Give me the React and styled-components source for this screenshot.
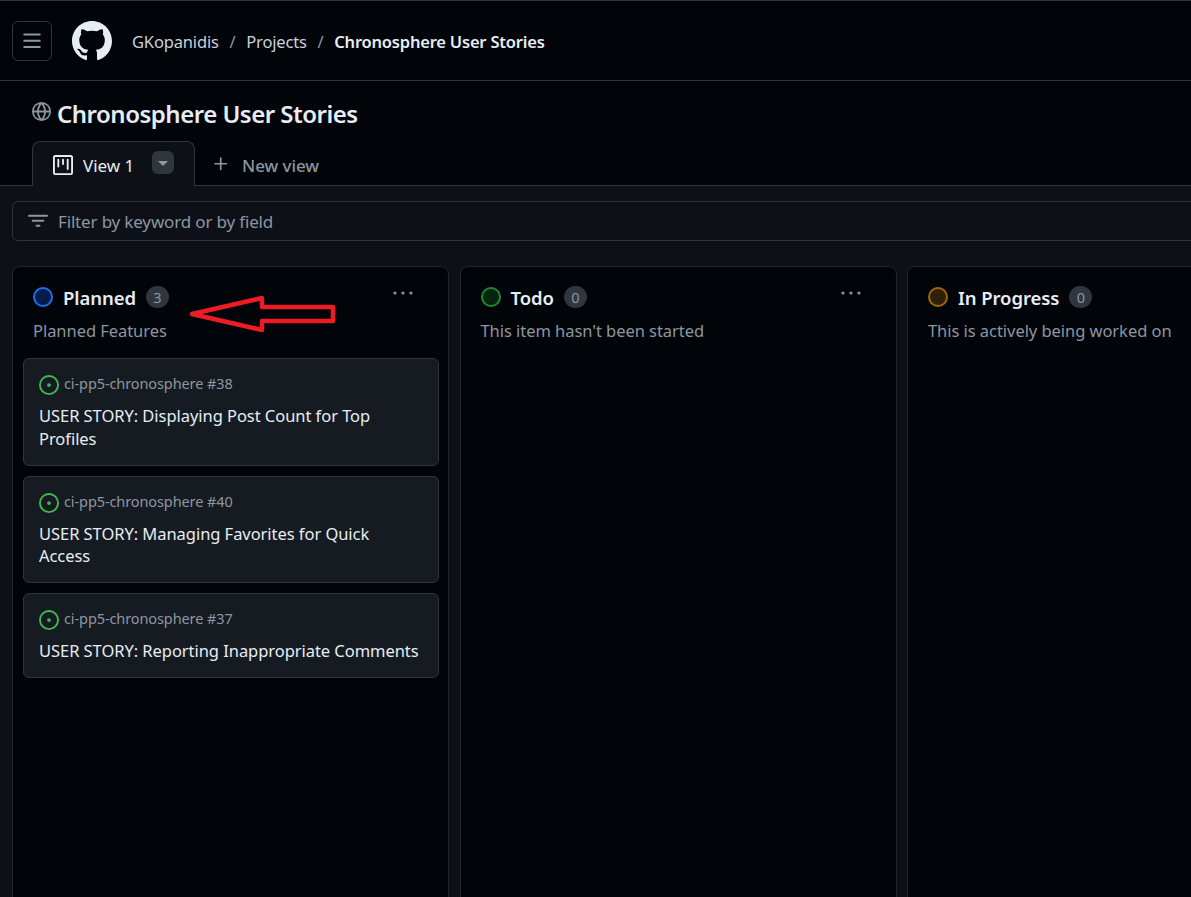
import React from 'react';
import styled, { createGlobalStyle } from 'styled-components';

const GlobalStyle = createGlobalStyle`
  html, body {
    margin: 0;
    padding: 0;
    height: 100%;
    overflow: hidden;
    background-color: #010409;
  }
  body {
    font-family: "Noto Sans", "Open Sans", sans-serif;
    color: #e6edf3;
  }
  * {
    box-sizing: border-box;
  }
`;

const Page = styled.div`
  position: relative;
  width: 1191px;
  height: 897px;
  overflow: hidden;
  display: flex;
  flex-direction: column;
  border-top: 1px solid #30363d;
`;

const TopBar = styled.header`
  height: 80px;
  flex: none;
  display: flex;
  align-items: center;
  padding: 0 12px;
  border-bottom: 1px solid #30363d;
`;

const MenuButton = styled.button`
  width: 40px;
  height: 40px;
  padding: 0;
  display: flex;
  align-items: center;
  justify-content: center;
  background: transparent;
  border: 1px solid #30363d;
  border-radius: 6px;
  color: #8d96a0;
`;

const Logo = styled.svg`
  width: 40px;
  height: 40px;
  margin-left: 20px;
  fill: #e6edf3;
`;

const Crumbs = styled.nav`
  display: flex;
  align-items: center;
  margin-left: 20px;
  padding-top: 2px;
  font-size: 16.5px;
  letter-spacing: -0.16px;
  color: #c9d1d9;
`;

const Slash = styled.span`
  margin: 0 10.75px;
  color: #8d96a0;
`;

const CrumbCurrent = styled.span`
  font-weight: 600;
  letter-spacing: -0.2px;
  color: #e6edf3;
`;

const TitleRow = styled.div`
  display: flex;
  align-items: center;
  height: 60px;
  padding: 0 0 0 32px;
  flex: none;
`;

const Globe = styled.svg`
  width: 19px;
  height: 19px;
  margin-right: 6px;
  fill: #8d96a0;
`;

const Title = styled.h1`
  margin: 4px 0 0;
  font-size: 24px;
  font-weight: 600;
  letter-spacing: -0.5px;
  color: #e6edf3;
`;

const TabStrip = styled.div`
  height: 45px;
  flex: none;
  display: flex;
  align-items: stretch;
  padding-left: 32px;
  border-bottom: 1px solid #30363d;
`;

const ActiveTab = styled.div`
  width: 163px;
  height: 45px;
  display: flex;
  align-items: center;
  padding: 2px 0 0 20px;
  background-color: #0d1117;
  border: 1px solid #30363d;
  border-bottom: none;
  border-radius: 8px 8px 0 0;
  font-size: 17px;
  letter-spacing: 0;
`;

const TabIcon = styled.svg`
  width: 20px;
  height: 20px;
  margin-right: 10px;
  fill: #e6edf3;
`;

const Caret = styled.span`
  width: 22px;
  height: 23px;
  margin: -5px 0 0 18px;
  display: flex;
  align-items: center;
  justify-content: center;
  background-color: #30363d;
  border-radius: 6px;
  &::after {
    content: '';
    border-left: 5px solid transparent;
    border-right: 5px solid transparent;
    border-top: 5px solid #9198a1;
    margin-top: 2px;
  }
`;

const NewView = styled.div`
  display: flex;
  align-items: center;
  margin-left: 17px;
  padding-top: 4px;
  color: #8d96a0;
  font-size: 17px;
  letter-spacing: -0.05px;
  font-weight: 500;
`;

const PlusIcon = styled.svg`
  width: 18px;
  height: 18px;
  margin: -3px 12px 0 0;
  fill: #8d96a0;
`;

const Board = styled.main`
  flex: 1;
  min-height: 0;
  display: flex;
  flex-direction: column;
  padding: 15px 0 0 12px;
  background-color: #0d1117;
`;

const FilterBar = styled.div`
  height: 40px;
  width: 1200px;
  flex: none;
  display: flex;
  align-items: center;
  padding-left: 15px;
  border: 1px solid #30363d;
  border-radius: 6px;
  color: #8d96a0;
  font-size: 17px;
  letter-spacing: -0.16px;
`;

const FilterIcon = styled.svg`
  width: 20px;
  height: 20px;
  margin-right: 10px;
  fill: #8d96a0;
`;

const Columns = styled.div`
  display: flex;
  gap: 10.5px;
  margin-top: 25px;
  flex: 1;
  min-height: 0;
`;

const Column = styled.section`
  width: 437px;
  flex: none;
  height: 700px;
  padding: 0 9px 0 10px;
  background-color: #010409;
  border: 1px solid #21262d;
  border-radius: 8px;
`;

const ColumnHead = styled.div`
  display: flex;
  align-items: center;
  height: 22px;
  margin: 19px 0 0 10px;
`;

const StatusDot = styled.span`
  width: 20px;
  height: 20px;
  flex: none;
  border-radius: 50%;
  border: 2px solid ${(p) => p.$ring};
  background-color: ${(p) => p.$fill};
`;

const ColumnName = styled.span`
  margin-left: 10px;
  font-size: 18.5px;
  font-weight: 600;
  letter-spacing: -0.08px;
  color: #e6edf3;
`;

const CountPill = styled.span`
  margin-left: 10px;
  width: 23px;
  height: 22px;
  display: flex;
  align-items: center;
  justify-content: center;
  border-radius: 11px;
  background-color: #30363d;
  color: #8d96a0;
  font-size: 14.5px;
`;

const MoreDots = styled.svg`
  width: 22px;
  height: 6px;
  margin: -8px 25px 0 auto;
  fill: #8d96a0;
`;

const ColumnDesc = styled.p`
  margin: 12px 0 0 10px;
  height: 22px;
  line-height: 22px;
  font-size: 16.5px;
  letter-spacing: -0.05px;
  color: #8d96a0;
  white-space: nowrap;
`;

const CardList = styled.div`
  display: flex;
  flex-direction: column;
  gap: 10px;
  margin-top: 16px;
`;

const Card = styled.article`
  padding: 14px 15px 14.5px 15px;
  background-color: #161b22;
  border: 1px solid #30363d;
  border-radius: 6px;
`;

const CardRepo = styled.div`
  display: flex;
  align-items: center;
  height: 22px;
  padding-bottom: 2px;
  font-size: 14.5px;
  letter-spacing: -0.1px;
  color: #8d96a0;
`;

const IssueIcon = styled.svg`
  width: 20px;
  height: 20px;
  margin: 4px 5px 0 0;
  fill: #3fb950;
`;

const CardTitle = styled.div`
  margin-top: 10px;
  font-size: 16.5px;
  line-height: 22.5px;
  letter-spacing: -0.05px;
  color: #e6edf3;
`;

const Arrow = styled.svg`
  position: absolute;
  left: 186px;
  top: 292px;
  width: 152px;
  height: 42px;
  fill: none;
  stroke: #ed1c24;
  stroke-width: 4.5;
  stroke-linejoin: round;
`;

const repo = 'ci-pp5-chronosphere';

const columns = [
  {
    name: 'Planned',
    count: 3,
    desc: 'Planned Features',
    ring: '#1f6feb',
    fill: '#051d4d',
    cards: [
      { num: 38, title: 'USER STORY: Displaying Post Count for Top Profiles' },
      { num: 40, title: 'USER STORY: Managing Favorites for Quick Access' },
      { num: 37, title: 'USER STORY: Reporting Inappropriate Comments' },
    ],
  },
  { name: 'Todo', count: 0, desc: "This item hasn't been started", ring: '#238636', fill: '#04260f', cards: [] },
  { name: 'In Progress', count: 0, desc: 'This is actively being worked on', ring: '#9e6a03', fill: '#2e2009', cards: [] },
];

function MenuIcon() {
  return (
    <svg width="20" height="20" viewBox="0 0 16 16" fill="currentColor">
      <path d="M1 2.75A.75.75 0 0 1 1.75 2h12.5a.75.75 0 0 1 0 1.5H1.75A.75.75 0 0 1 1 2.75Zm0 5A.75.75 0 0 1 1.75 7h12.5a.75.75 0 0 1 0 1.5H1.75A.75.75 0 0 1 1 7.75ZM1.75 12h12.5a.75.75 0 0 1 0 1.5H1.75a.75.75 0 0 1 0-1.5Z" />
    </svg>
  );
}

function App() {
  return (
    <Page>
      <GlobalStyle />
      <TopBar>
        <MenuButton aria-label="Open menu">
          <MenuIcon />
        </MenuButton>
        <Logo viewBox="0 0 16 16">
          <path d="M8 0c4.42 0 8 3.58 8 8a8.013 8.013 0 0 1-5.45 7.59c-.4.08-.55-.17-.55-.38 0-.27.01-1.13.01-2.2 0-.75-.25-1.23-.54-1.48 1.78-.2 3.65-.88 3.65-3.95 0-.88-.31-1.59-.82-2.15.08-.2.36-1.02-.08-2.12 0 0-.67-.22-2.2.82-.64-.18-1.32-.27-2-.27-.68 0-1.36.09-2 .27-1.53-1.03-2.2-.82-2.2-.82-.44 1.1-.16 1.92-.08 2.12-.51.56-.82 1.27-.82 2.15 0 3.06 1.86 3.75 3.64 3.95-.23.2-.44.55-.51 1.07-.46.21-1.61.55-2.33-.66-.15-.24-.6-.83-1.23-.82-.67.01-.27.38.01.53.34.19.73.9.82 1.13.16.45.68 1.31 2.69.94 0 .67.01 1.3.01 1.49 0 .21-.15.45-.55.38A7.995 7.995 0 0 1 0 8c0-4.42 3.58-8 8-8Z" />
        </Logo>
        <Crumbs>
          <span>GKopanidis</span>
          <Slash>/</Slash>
          <span>Projects</span>
          <Slash>/</Slash>
          <CrumbCurrent>Chronosphere User Stories</CrumbCurrent>
        </Crumbs>
      </TopBar>

      <TitleRow>
        <Globe viewBox="0 0 16 16">
          <path d="M8 0a8 8 0 1 1 0 16A8 8 0 0 1 8 0ZM5.78 8.75a9.64 9.64 0 0 0 1.363 4.177c.255.426.542.832.857 1.215.245-.296.551-.705.857-1.215A9.64 9.64 0 0 0 10.22 8.75Zm4.44-1.5a9.64 9.64 0 0 0-1.363-4.177c-.307-.51-.612-.919-.857-1.215a9.927 9.927 0 0 0-.857 1.215A9.64 9.64 0 0 0 5.78 7.25Zm-5.944 1.5H1.543a6.507 6.507 0 0 0 4.666 5.5c-.123-.181-.24-.365-.352-.552-.715-1.192-1.437-2.874-1.581-4.948Zm-2.733-1.5h2.733c.144-2.074.866-3.756 1.58-4.948.12-.197.237-.381.353-.552a6.507 6.507 0 0 0-4.666 5.5Zm10.181 1.5c-.144 2.074-.866 3.756-1.58 4.948-.12.197-.237.381-.353.552a6.507 6.507 0 0 0 4.666-5.5Zm2.733-1.5a6.507 6.507 0 0 0-4.666-5.5c.123.181.24.365.353.552.714 1.192 1.436 2.874 1.58 4.948Z" />
        </Globe>
        <Title>Chronosphere User Stories</Title>
      </TitleRow>

      <TabStrip>
        <ActiveTab>
          <TabIcon viewBox="0 0 16 16">
            <path d="M0 1.75C0 .784.784 0 1.75 0h12.5C15.216 0 16 .784 16 1.75v12.5A1.75 1.75 0 0 1 14.25 16H1.75A1.75 1.75 0 0 1 0 14.25ZM1.5 1.75v12.5c0 .138.112.25.25.25h12.5a.25.25 0 0 0 .25-.25V1.75a.25.25 0 0 0-.25-.25H1.75a.25.25 0 0 0-.25.25ZM11.75 3a.75.75 0 0 1 .75.75v7.5a.75.75 0 0 1-1.5 0v-7.5a.75.75 0 0 1 .75-.75Zm-8.25.75a.75.75 0 0 1 1.5 0v5.5a.75.75 0 0 1-1.5 0ZM8 3a.75.75 0 0 1 .75.75v3.5a.75.75 0 0 1-1.5 0v-3.5A.75.75 0 0 1 8 3Z" />
          </TabIcon>
          View 1
          <Caret />
        </ActiveTab>
        <NewView>
          <PlusIcon viewBox="0 0 16 16">
            <path d="M7.75 2a.75.75 0 0 1 .75.75V7h4.25a.75.75 0 0 1 0 1.5H8.5v4.25a.75.75 0 0 1-1.5 0V8.5H2.75a.75.75 0 0 1 0-1.5H7V2.75A.75.75 0 0 1 7.75 2Z" />
          </PlusIcon>
          New view
        </NewView>
      </TabStrip>

      <Board>
        <FilterBar>
          <FilterIcon viewBox="0 0 16 16">
            <path d="M.75 3h14.5a.75.75 0 0 1 0 1.5H.75a.75.75 0 0 1 0-1.5ZM3 7.75A.75.75 0 0 1 3.75 7h8.5a.75.75 0 0 1 0 1.5h-8.5A.75.75 0 0 1 3 7.75Zm3 4a.75.75 0 0 1 .75-.75h2.5a.75.75 0 0 1 0 1.5h-2.5a.75.75 0 0 1-.75-.75Z" />
          </FilterIcon>
          Filter by keyword or by field
        </FilterBar>

        <Columns>
          {columns.map((col, i) => (
            <Column key={col.name}>
              <ColumnHead>
                <StatusDot $ring={col.ring} $fill={col.fill} />
                <ColumnName>{col.name}</ColumnName>
                <CountPill>{col.count}</CountPill>
                {i < 2 && (
                  <MoreDots viewBox="0 0 22 6">
                    <circle cx="3" cy="3" r="1.6" />
                    <circle cx="11" cy="3" r="1.6" />
                    <circle cx="19" cy="3" r="1.6" />
                  </MoreDots>
                )}
              </ColumnHead>
              <ColumnDesc>{col.desc}</ColumnDesc>
              {col.cards.length > 0 && (
                <CardList>
                  {col.cards.map((card) => (
                    <Card key={card.num}>
                      <CardRepo>
                        <IssueIcon viewBox="0 0 16 16">
                          <path d="M8 9.5a1.5 1.5 0 1 0 0-3 1.5 1.5 0 0 0 0 3Z" />
                          <path d="M8 0a8 8 0 1 1 0 16A8 8 0 0 1 8 0ZM1.5 8a6.5 6.5 0 1 0 13 0 6.5 6.5 0 0 0-13 0Z" />
                        </IssueIcon>
                        {repo} #{card.num}
                      </CardRepo>
                      <CardTitle>{card.title}</CardTitle>
                    </Card>
                  ))}
                </CardList>
              )}
            </Column>
          ))}
        </Columns>
      </Board>

      <Arrow viewBox="0 0 152 42">
        <path d="M6 21 L76 5 L76 14 L147 14 L147 28 L76 28 L76 37 Z" />
      </Arrow>
    </Page>
  );
}

export default App;
